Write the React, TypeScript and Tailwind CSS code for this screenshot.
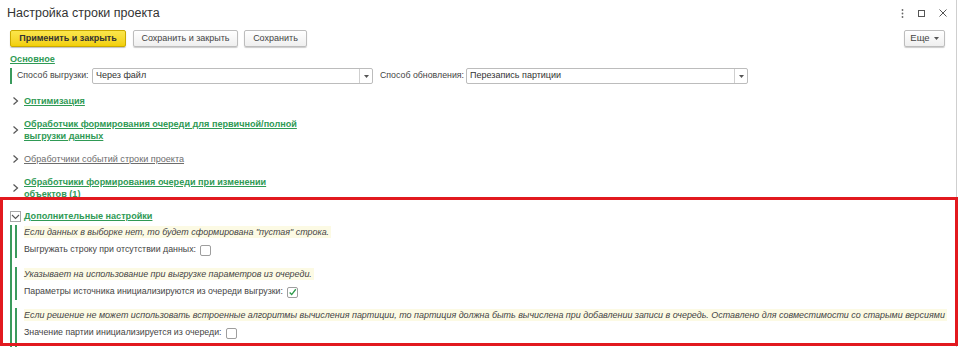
import React from "react";

const green = "text-[#2f9a55]";

function Chevron() {
  return (
    <svg width="7" height="10" viewBox="0 0 7 10" className="shrink-0">
      <path d="M1.5 1.5 L5.5 5 L1.5 8.5" fill="none" stroke="#555" strokeWidth="1.2" />
    </svg>
  );
}

function Checkbox({ checked }: { checked?: boolean }) {
  return (
    <div className="w-[11px] h-[11px] border border-[#9e9e9e] rounded-[2px] bg-white flex items-center justify-center shrink-0">
      {checked && (
        <svg width="11" height="11" viewBox="0 0 11 11">
          <path d="M2 5.5 L4.5 8 L9.5 1.5" fill="none" stroke="#2c9a4a" strokeWidth="1.6" />
        </svg>
      )}
    </div>
  );
}

function Select({ value, w }: { value: string; w: string }) {
  return (
    <div className={`${w} h-[16px] border border-[#bcbcbc] rounded-[2px] flex items-stretch bg-white shrink-0`}>
      <div className="flex-1 pl-[3px] flex items-center text-[9px] text-[#333] whitespace-nowrap">{value}</div>
      <div className="w-[13px] border-l border-[#cfcfcf] flex items-center justify-center">
        <svg width="5" height="3" viewBox="0 0 5 3">
          <path d="M0 0 L5 0 L2.5 3 Z" fill="#555" />
        </svg>
      </div>
    </div>
  );
}

function LinkRow({ lines, gray }: { lines: string[]; gray?: boolean }) {
  return (
    <div className="flex items-center pl-[12px]">
      <Chevron />
      <div
        className={`ml-[5px] text-[9.1px] leading-[12px] underline underline-offset-[1px] whitespace-nowrap ${
          gray ? "text-[#6d6d6d] font-normal" : `${green} font-bold`
        }`}
      >
        {lines.map((l, i) => (
          <div key={i}>{l}</div>
        ))}
      </div>
    </div>
  );
}

function Hint({ children }: { children: React.ReactNode }) {
  return (
    <div className="h-[12px] flex items-center">
      <span className="bg-[#fcfae4] italic text-[8.95px] leading-[12px] text-[#444] pr-[2px] whitespace-nowrap">
        {children}
      </span>
    </div>
  );
}

export default function App() {
  return (
    <div className="relative w-[960px] h-[347px] overflow-hidden bg-white font-['Liberation_Sans',Arial,sans-serif] text-[#333]">
      <div className="w-[957px] h-full border-r border-[#cfcfcf] flex flex-col">
        {/* Title */}
        <div className="h-[26px] flex items-center justify-between pl-[7px] pr-[9px] shrink-0">
          <div className="text-[12.5px] text-[#333]">Настройка строки проекта</div>
          <div className="flex items-center gap-[14px]">
            <svg width="3" height="9" viewBox="0 0 3 9">
              <circle cx="1.5" cy="1" r="0.9" fill="#666" />
              <circle cx="1.5" cy="4.5" r="0.9" fill="#666" />
              <circle cx="1.5" cy="8" r="0.9" fill="#666" />
            </svg>
            <svg width="7" height="7" viewBox="0 0 7 7">
              <rect x="0.5" y="0.5" width="6" height="6" fill="none" stroke="#555" strokeWidth="1" />
            </svg>
            <svg width="8" height="8" viewBox="0 0 8 8">
              <path d="M0.5 0.5 L7.5 7.5 M7.5 0.5 L0.5 7.5" stroke="#555" strokeWidth="1" />
            </svg>
          </div>
        </div>

        {/* Buttons */}
        <div className="mt-[4px] h-[17px] flex pl-[10px] pr-[11px] shrink-0">
          <div className="w-[116px] h-[17px] rounded-[2px] border border-[#caa900] bg-gradient-to-b from-[#fbe64a] to-[#f2cf02] shadow-[0_1px_1px_rgba(0,0,0,0.25)] flex items-center justify-center text-[9px] font-bold text-[#333]">
            Применить и закрыть
          </div>
          <div className="ml-[7px] w-[105px] h-[17px] rounded-[2px] border border-[#bdbdbd] bg-gradient-to-b from-white to-[#efefef] shadow-[0_1px_1px_rgba(0,0,0,0.2)] flex items-center justify-center text-[9px] text-[#444]">
            Сохранить и закрыть
          </div>
          <div className="ml-[6px] w-[63px] h-[17px] rounded-[2px] border border-[#bdbdbd] bg-gradient-to-b from-white to-[#efefef] shadow-[0_1px_1px_rgba(0,0,0,0.2)] flex items-center justify-center text-[9px] text-[#444]">
            Сохранить
          </div>
          <div className="flex-1" />
          <div className="w-[41px] h-[17px] rounded-[2px] border border-[#bdbdbd] bg-gradient-to-b from-white to-[#efefef] shadow-[0_1px_1px_rgba(0,0,0,0.2)] flex items-center justify-center gap-[4px] text-[9.5px] text-[#444]">
            Еще
            <svg width="5" height="3" viewBox="0 0 5 3">
              <path d="M0 0 L5 0 L2.5 3 Z" fill="#555" />
            </svg>
          </div>
        </div>

        {/* Основное */}
        <div className="mt-[6px] h-[14px] flex items-center pl-[10px] shrink-0">
          <span className={`text-[9.1px] font-bold underline underline-offset-[1px] ${green}`}>Основное</span>
        </div>

        {/* Fields */}
        <div className="mt-[1px] h-[16px] flex items-center shrink-0">
          <div className="ml-[10px] w-[2px] h-full bg-[#3a9a5c]" />
          <div className="ml-[5px] w-[75px] text-[8.8px] text-[#444] whitespace-nowrap">Способ выгрузки:</div>
          <Select value="Через файл" w="w-[281px]" />
          <div className="ml-[7px] w-[86px] text-[8.8px] text-[#444] whitespace-nowrap">Способ обновления:</div>
          <Select value="Перезапись партиции" w="w-[282px]" />
        </div>

        <div className="mt-[11px] shrink-0">
          <LinkRow lines={["Оптимизация"]} />
        </div>
        <div className="mt-[11px] shrink-0">
          <LinkRow lines={["Обработчик формирования очереди для первичной/полной", "выгрузки данных"]} />
        </div>
        <div className="mt-[11px] shrink-0">
          <LinkRow gray lines={["Обработчики событий строки проекта"]} />
        </div>
        <div className="mt-[11px] shrink-0">
          <LinkRow lines={["Обработчики формирования очереди при изменении", "объектов (1)"]} />
        </div>

        {/* Дополнительные настройки */}
        <div className="mt-[10px] h-[13px] flex items-center pl-[10px] shrink-0">
          <div className="w-[11px] h-[11px] border border-[#a8a8a8] flex items-center justify-center bg-white">
            <svg width="9" height="6" viewBox="0 0 9 6">
              <path d="M1 1 L4.5 4.5 L8 1" fill="none" stroke="#555" strokeWidth="1.1" />
            </svg>
          </div>
          <span className={`ml-[3px] text-[9.1px] font-bold underline underline-offset-[1px] ${green}`}>
            Дополнительные настройки
          </span>
        </div>

        <div className="mt-[2px] flex shrink-0">
          <div className="ml-[10px] w-[2px] bg-[#3a9a5c]" />
          <div className="ml-[3px] flex flex-col">
            <div className="flex">
              <div className="w-[2px] bg-[#3a9a5c]" />
              <div className="pl-[7px] pt-[1px] pb-[2px]">
                <Hint>Если данных в выборке нет, то будет сформирована "пустая" строка.</Hint>
                <div className="mt-[6px] h-[12px] flex items-center gap-[4px] text-[8.8px] text-[#444] whitespace-nowrap">
                  Выгружать строку при отсутствии данных:
                  <Checkbox />
                </div>
              </div>
            </div>
            <div className="flex mt-[9px]">
              <div className="w-[2px] bg-[#3a9a5c]" />
              <div className="pl-[7px] pt-[1px] pb-[2px]">
                <Hint>Указывает на использование при выгрузке параметров из очереди.</Hint>
                <div className="mt-[6px] h-[12px] flex items-center gap-[4px] text-[8.8px] text-[#444] whitespace-nowrap">
                  Параметры источника инициализируются из очереди выгрузки:
                  <Checkbox checked />
                </div>
              </div>
            </div>
            <div className="flex mt-[8px]">
              <div className="w-[2px] bg-[#3a9a5c]" />
              <div className="pl-[7px] pt-[1px] pb-[8px]">
                <Hint>
                  Если решение не может использовать встроенные алгоритмы вычисления партиции, то партиция должна быть
                  вычислена при добавлении записи в очередь. Оставлено для совместимости со старыми версиями
                </Hint>
                <div className="mt-[6px] h-[12px] flex items-center gap-[4px] text-[8.8px] text-[#444] whitespace-nowrap">
                  Значение партии инициализируется из очереди:
                  <Checkbox />
                </div>
              </div>
            </div>
          </div>
        </div>
      </div>

      {/* Red annotation frame */}
      <div className="absolute left-0 top-[197px] w-[958px] h-[149px] border-[3px] border-[#e2191f] pointer-events-none" />
    </div>
  );
}
